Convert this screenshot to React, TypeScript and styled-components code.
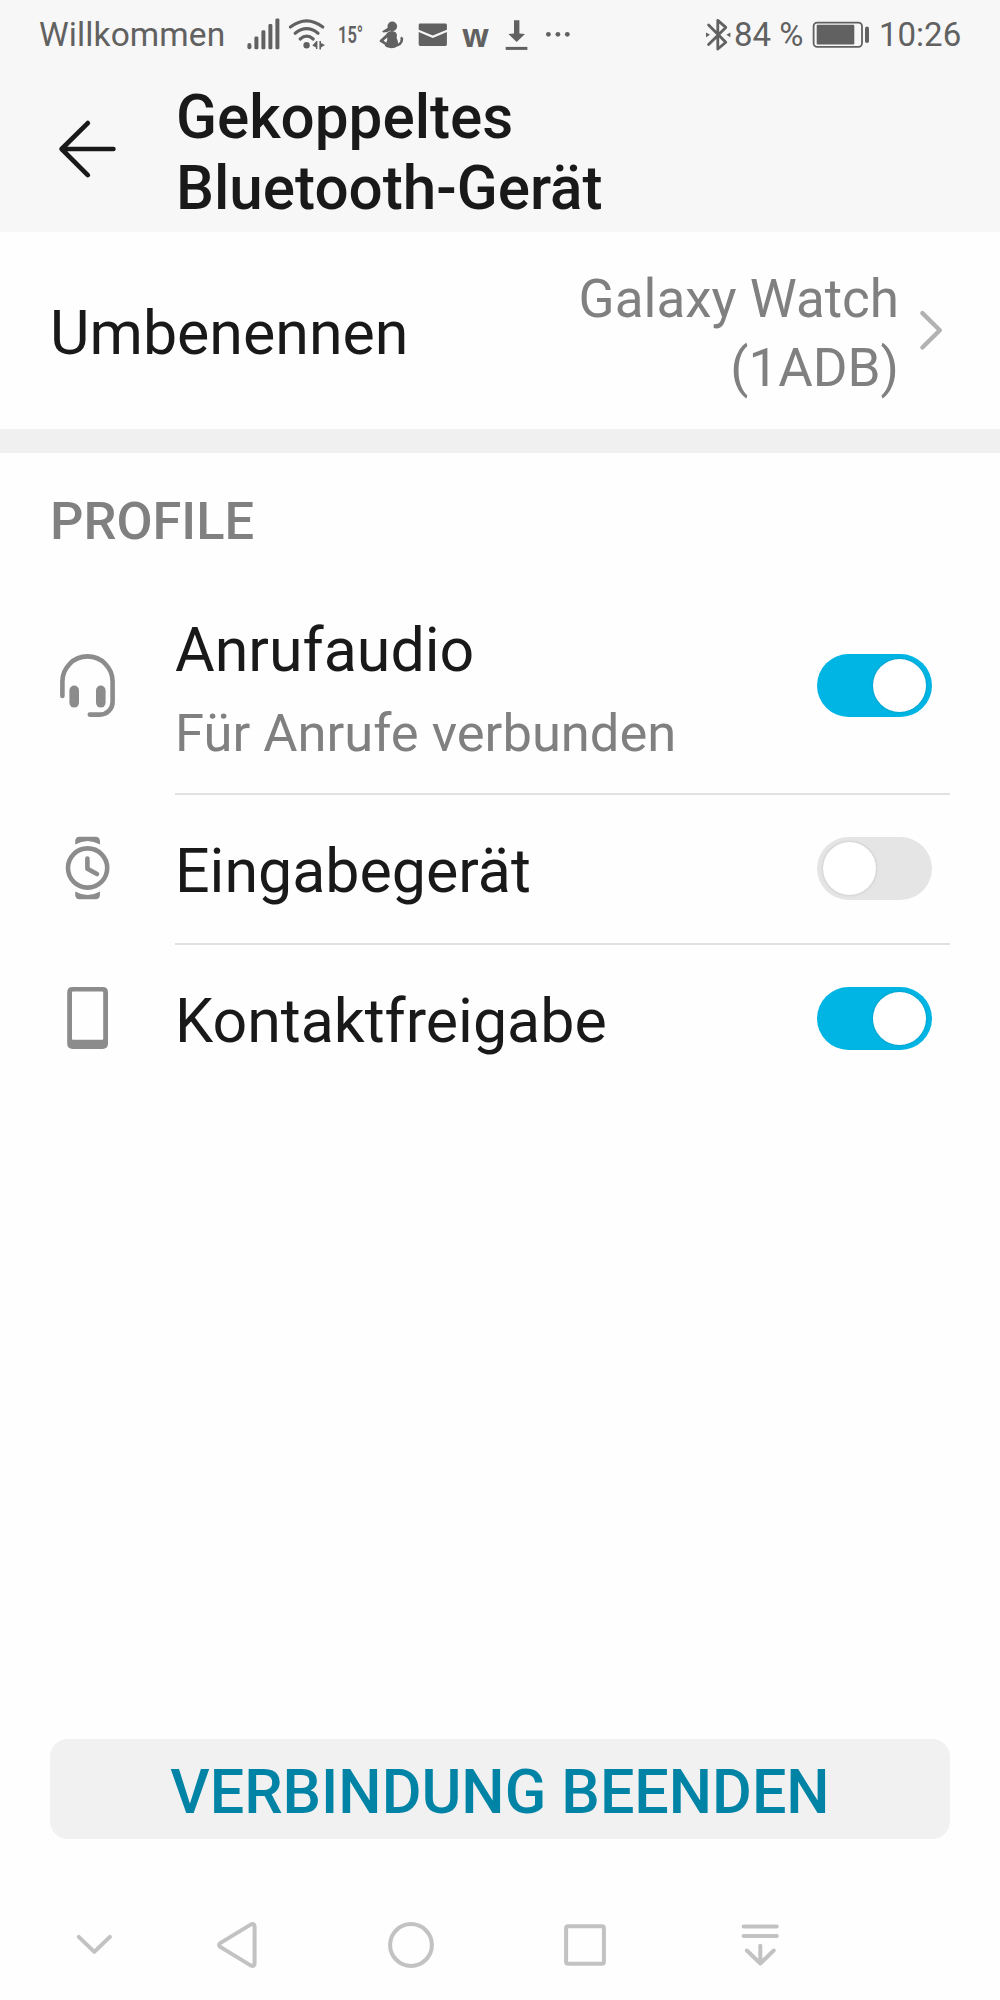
import React, { useState } from "react";
import styled, { createGlobalStyle } from "styled-components";

const GlobalStyle = createGlobalStyle`
  body { margin: 0; background: #fefefe; }
  * { box-sizing: border-box; }
  button { font: inherit; border: 0; padding: 0; background: none; }
  svg { display: block; flex: none; }
`;

const ink = "#191919";
const muted = "#808080";
const statusInk = "#616161";
const navInk = "#c2c2c2";

const Screen = styled.div`
  width: 1000px;
  height: 2000px;
  display: flex;
  flex-direction: column;
  background: #fefefe;
  color: ${ink};
  font-family: Roboto, "Liberation Sans", sans-serif;
  overflow: hidden;
`;

const StatusBar = styled.div`
  height: 69px;
  flex: none;
  padding: 0 39px;
  display: flex;
  justify-content: space-between;
  align-items: center;
  background: #f7f7f7;
  color: ${statusInk};
  font-size: 33px;
  line-height: 69px;
  white-space: nowrap;
`;

const StatusGroup = styled.div`
  display: flex;
  align-items: center;
`;

const Carrier = styled.span`
  width: 207px;
  font-size: 33.5px;
  letter-spacing: 0.1px;
`;

const Temperature = styled.span`
  width: 40px;
  font-size: 24.5px;
  font-weight: 600;
  transform: scaleX(0.67);
  transform-origin: 0 50%;
`;

const Word = styled.span`
  width: 42px;
  font-family: "Open Sans", sans-serif;
  font-size: 31.5px;
  font-weight: 700;
  line-height: 62px;
`;

const Percent = styled.span`
  width: 77px;
  margin-left: -1px;
`;

const Clock = styled.span`
  width: 82px;
`;

const Header = styled.header`
  height: 163px;
  flex: none;
  display: flex;
  padding: 13px 0 0 54px;
  background: #f7f7f7;
`;

const BackButton = styled.button`
  width: 122px;
  height: 134px;
  display: flex;
  align-items: center;
`;

const Title = styled.h1`
  margin: 0;
  width: 520px;
  font-size: 60.2px;
  font-weight: 500;
  line-height: 71px;
`;

const RenameRow = styled.div`
  height: 197px;
  flex: none;
  display: flex;
  align-items: center;
  justify-content: space-between;
  padding: 0 50px;
`;

const RenameLabel = styled.div`
  padding-top: 6px;
  font-size: 60.9px;
  line-height: 70px;
`;

const RenameValue = styled.div`
  display: flex;
  align-items: center;
`;

const DeviceName = styled.div`
  width: 340px;
  padding-top: 6px;
  text-align: right;
  color: ${muted};
  font-size: 53px;
  line-height: 69px;
`;

const SectionGap = styled.div`
  height: 24px;
  flex: none;
  background: #f0f0f0;
`;

const SectionTitle = styled.h2`
  height: 126px;
  flex: none;
  margin: 0;
  padding: 8px 50px 0;
  color: ${muted};
  font-size: 52.4px;
  font-weight: 500;
  line-height: 120px;
`;

const Row = styled.div<{ $height: number }>`
  height: ${(p) => p.$height}px;
  flex: none;
  display: flex;
  padding-left: 50px;
`;

const RowIcon = styled.div`
  width: 125px;
  padding-bottom: 2px;
  display: flex;
  align-items: center;
`;

const RowBody = styled.div<{ $divided: boolean }>`
  width: 775px;
  display: flex;
  align-items: center;
  justify-content: space-between;
  padding: ${(p) => (p.$divided ? "0 18px 0 0" : "0 18px 2px 0")};
  border-bottom: ${(p) => (p.$divided ? "2px solid #e1e1e1" : "0")};
`;

const RowText = styled.div<{ $offset: number }>`
  padding-top: ${(p) => p.$offset}px;
`;

const RowLabel = styled.div`
  font-size: 60.9px;
  line-height: 82px;
`;

const RowHint = styled.div`
  color: ${muted};
  font-size: 52.5px;
  line-height: 82px;
`;

const Track = styled.button<{ $on: boolean }>`
  width: 115px;
  height: 63px;
  margin-bottom: 1px;
  border-radius: 32px;
  display: flex;
  align-items: center;
  justify-content: ${(p) => (p.$on ? "flex-end" : "flex-start")};
  padding: 0 6px;
  background: ${(p) => (p.$on ? "#00b5e4" : "#e5e5e5")};
`;

const Knob = styled.span`
  width: 53px;
  height: 53px;
  border-radius: 50%;
  background: #ffffff;
  box-shadow: 0 0 3px rgba(0, 0, 0, 0.18);
`;

const Footer = styled.div`
  margin-top: auto;
  flex: none;
  padding: 0 50px;
`;

const DisconnectButton = styled.button`
  width: 900px;
  height: 100px;
  border-radius: 18px;
  background: #f1f1f1;
  color: #0083a5;
  padding-top: 6px;
  font-size: 61px;
  font-weight: 500;
  line-height: 94px;
  white-space: nowrap;
`;

const NavBar = styled.nav`
  height: 161px;
  flex: none;
  display: flex;
  align-items: center;
  padding: 50px 0 0 64px;
`;

const NavButton = styled.button<{ $width: number }>`
  width: ${(p) => p.$width}px;
  display: flex;
  justify-content: flex-start;
`;

const SignalIcon = () => (
  <svg width="40" height="68" viewBox="246 0 40 68" fill={statusInk}>
    <rect x="247.4" y="42" width="4" height="6.3" rx="2" />
    <rect x="254.4" y="35.6" width="4" height="12.7" rx="1.4" />
    <rect x="261.4" y="29.3" width="4" height="19" rx="1.4" />
    <rect x="268.4" y="23" width="4" height="25.3" rx="1.4" />
    <rect x="275.4" y="17.4" width="4" height="30.9" rx="1.4" />
  </svg>
);

const WifiIcon = () => (
  <svg width="52" height="68" viewBox="286 0 52 68" fill="none" stroke={statusInk} strokeWidth="3.2" strokeLinecap="round">
    <path d="M290.4 26 Q306.7 13.6 322.8 26" />
    <path d="M295.2 32.2 Q306.7 23.2 318 32.2" />
    <path d="M300.2 38 Q306.7 32.2 313.2 38" />
    <g fill={statusInk} stroke="none">
      <circle cx="306.6" cy="44.2" r="3.2" />
      <path d="M312.3 44.4 L316 40.6 V40 H317.4 V48 H316 V46.4Z M319.4 40 H321 V42 L325 44 L321 46.6 V48.4 H319.4Z" />
    </g>
  </svg>
);

const PregnancyIcon = () => (
  <svg width="38" height="68" viewBox="378 0 38 68" fill={statusInk}>
    <circle cx="392.3" cy="25.4" r="4.8" />
    <path d="M388.6 26.2 L382.2 30.2 L383.2 31.6 L387.4 31 Q390.4 30 391 28Z" />
    <path
      fillRule="evenodd"
      d="M389.2 30.6 Q393 29.2 396 31.6 Q397.6 33.6 396.6 37 Q398 39.4 398 42.6 Q400.6 41.4 400.6 38.4 L400.2 37 L401.8 35.6 L403.2 37.4 Q403.4 43.4 397.8 45.2 Q392.4 48.6 386.2 46 Q384.2 44.4 384.8 43.8 L379.6 40.6 Q379.4 39.4 380.6 38.6 L386 33.6 Q387 31.4 389.2 30.6Z M387.2 36.4 L383.6 39.6 L386.2 41.8 Q387.8 39.4 387.2 36.4Z"
    />
  </svg>
);

const MailIcon = () => (
  <svg width="46" height="68" viewBox="416 0 46 68" fill={statusInk}>
    <path d="M420.2 22.6 H445.4 Q446.9 22.6 446.9 24 V28.8 L432.8 34.6 L418.7 28.8 V24 Q418.7 22.6 420.2 22.6Z" />
    <path d="M418.7 31 L432.8 36.9 L446.9 31 V43.6 Q446.9 45 445.4 45 H420.2 Q418.7 45 418.7 43.6Z" />
  </svg>
);

const DownloadIcon = () => (
  <svg width="40" height="68" viewBox="504 0 40 68" fill={statusInk}>
    <path d="M514 19.3 H519.4 V32.4 L525 33 L516.7 41 L508.4 33 L514 32.4Z" />
    <rect x="505.7" y="45.9" width="21.7" height="3" />
  </svg>
);

const MoreIcon = () => (
  <svg width="30" height="68" viewBox="544 0 30 68" fill={statusInk}>
    <circle cx="548.4" cy="33.3" r="2.4" />
    <circle cx="557.9" cy="33.3" r="2.4" />
    <circle cx="567.3" cy="33.3" r="2.4" />
  </svg>
);

const BluetoothIcon = () => (
  <svg width="30" height="68" viewBox="705 0 30 68" fill="none" stroke={statusInk} strokeWidth="2.8" strokeLinejoin="round" strokeLinecap="round">
    <path d="M708.6 24 L725.8 41.2 L717.8 48 V19.4 L725.8 26.4 L708.6 43.4" />
    <path d="M706 31.4 V36.2 L710 33.8Z M730.4 31.4 V36.2 L726.4 33.8Z" fill={statusInk} stroke="none" />
  </svg>
);

const BatteryIcon = () => (
  <svg width="68" height="68" viewBox="811 0 68 68" fill={statusInk}>
    <rect x="813.6" y="21.6" width="48.4" height="24.2" rx="3.6" fill="none" stroke={statusInk} strokeWidth="1.8" />
    <rect x="816.7" y="23.8" width="37.6" height="19.6" rx="1" />
    <rect x="865" y="25.4" width="4" height="16.6" rx="2" />
  </svg>
);

const BackIcon = () => (
  <svg width="66" height="66" viewBox="54 116.3 66 66" fill="none" stroke={ink} strokeWidth="4.7" strokeLinecap="round" strokeLinejoin="round">
    <path d="M61.6 149.3 H113.4 M87.8 123.4 L61.6 149.3 L87.8 175.4" />
  </svg>
);

const ChevronIcon = () => (
  <svg width="51" height="50" viewBox="899 305.5 51 50" fill="none" stroke="#b2b2b2" strokeWidth="4.4" strokeLinecap="round" strokeLinejoin="round">
    <path d="M922.4 312.6 L939.8 329.8 L922.4 347" />
  </svg>
);

const HeadsetIcon = () => (
  <svg width="76" height="70" viewBox="50 651 76 70" fill="none" stroke="#8c8c8c" strokeWidth="4.6" strokeLinecap="round">
    <path d="M62.4 696 V681.5 A25.1 25.1 0 0 1 112.6 681.5 V702 A12.6 12.6 0 0 1 100 714.6 H89.8" />
    <g fill="#8c8c8c" stroke="none">
      <rect x="69.4" y="685.6" width="9.6" height="22" rx="4.8" />
      <rect x="96" y="685.6" width="9.6" height="22" rx="4.8" />
    </g>
  </svg>
);

const WatchIcon = () => (
  <svg width="76" height="70" viewBox="50 834 76 70" fill="none" stroke="#8c8c8c" strokeWidth="4.6" strokeLinecap="round" strokeLinejoin="round">
    <circle cx="87.6" cy="868" r="19.6" />
    <path d="M87.4 858.6 V868.8 L97 874" />
    <g fill="#8c8c8c" stroke="none">
      <path d="M75.2 844.6 V841 Q75.6 836.8 79.6 836.7 H95.6 Q99.6 836.8 100 841 V844.6 Q87.6 837.6 75.2 844.6Z" />
      <path d="M75.2 891.4 V895 Q75.6 899.2 79.6 899.3 H95.6 Q99.6 899.2 100 895 V891.4 Q87.6 898.4 75.2 891.4Z" />
    </g>
  </svg>
);

const PhoneIcon = () => (
  <svg width="76" height="70" viewBox="50 984 76 70" fill="#8c8c8c">
    <path
      fillRule="evenodd"
      d="M72.6 987 H102.6 Q108 987 108 992.4 V1043.6 Q108 1049 102.6 1049 H72.6 Q67.2 1049 67.2 1043.6 V992.4 Q67.2 987 72.6 987Z M72.8 991.6 Q72 991.6 72 992.4 V1039 Q72 1039.8 72.8 1039.8 H102.4 Q103.2 1039.8 103.2 1039 V992.4 Q103.2 991.6 102.4 991.6Z"
    />
  </svg>
);

const navStroke = { fill: "none", stroke: navInk, strokeWidth: 4, strokeLinecap: "round" as const, strokeLinejoin: "round" as const };

const NavHideIcon = () => (
  <svg width="60" height="60" viewBox="64 1914.3 60 60" {...navStroke}>
    <path d="M78.8 1936.2 L94.3 1951.2 L109.9 1936.2" />
  </svg>
);

const NavBackIcon = () => (
  <svg width="60" height="60" viewBox="207 1914.3 60 60" {...navStroke}>
    <path d="M220.2 1942.4 L250.6 1923.9 Q254.6 1922 254.6 1926 V1962.6 Q254.6 1966.6 250.6 1964.7 L220.2 1946.2 Q218 1944.3 220.2 1942.4Z" />
  </svg>
);

const NavHomeIcon = () => (
  <svg width="60" height="60" viewBox="381 1914.3 60 60" {...navStroke}>
    <circle cx="411" cy="1944.3" r="20.9" />
  </svg>
);

const NavRecentIcon = () => (
  <svg width="60" height="60" viewBox="555 1914.3 60 60" {...navStroke}>
    <rect x="566.1" y="1925.5" width="37.8" height="37.6" rx="2" />
  </svg>
);

const NavPanelIcon = () => (
  <svg width="60" height="60" viewBox="730 1914.3 60 60" {...navStroke}>
    <path d="M743.6 1925.7 H776.8 M743.6 1935.4 H776.8 M760.3 1945 V1962.6 M746.9 1949.8 L760.3 1962.8 L773.7 1949.8" />
  </svg>
);

const Toggle = ({ initial, label }: { initial: boolean; label: string }) => {
  const [on, setOn] = useState(initial);
  return (
    <Track $on={on} role="switch" aria-checked={on} aria-label={label} onClick={() => setOn(!on)}>
      <Knob />
    </Track>
  );
};

const profiles = [
  { label: "Anrufaudio", hint: "Für Anrufe verbunden", on: true, height: 216, offset: 11, Icon: HeadsetIcon },
  { label: "Eingabegerät", on: false, height: 150, offset: 6, Icon: WatchIcon },
  { label: "Kontaktfreigabe", on: true, height: 150, offset: 6, Icon: PhoneIcon },
];

export default function App() {
  return (
    <Screen>
      <GlobalStyle />
      <StatusBar>
        <StatusGroup>
          <Carrier>Willkommen</Carrier>
          <SignalIcon />
          <WifiIcon />
          <Temperature>15°</Temperature>
          <PregnancyIcon />
          <MailIcon />
          <Word>w</Word>
          <DownloadIcon />
          <MoreIcon />
        </StatusGroup>
        <StatusGroup>
          <BluetoothIcon />
          <Percent>84 %</Percent>
          <BatteryIcon />
          <Clock>10:26</Clock>
        </StatusGroup>
      </StatusBar>
      <Header>
        <BackButton>
          <BackIcon />
        </BackButton>
        <Title>
          Gekoppeltes
          <br />
          Bluetooth-Gerät
        </Title>
      </Header>
      <RenameRow>
        <RenameLabel>Umbenennen</RenameLabel>
        <RenameValue>
          <DeviceName>
            Galaxy Watch
            <br />
            (1ADB)
          </DeviceName>
          <ChevronIcon />
        </RenameValue>
      </RenameRow>
      <SectionGap />
      <SectionTitle>PROFILE</SectionTitle>
      {profiles.map(({ label, hint, on, height, offset, Icon }, i) => (
        <Row key={label} $height={height}>
          <RowIcon>
            <Icon />
          </RowIcon>
          <RowBody $divided={i < profiles.length - 1}>
            <RowText $offset={offset}>
              <RowLabel>{label}</RowLabel>
              {hint && <RowHint>{hint}</RowHint>}
            </RowText>
            <Toggle initial={on} label={label} />
          </RowBody>
        </Row>
      ))}
      <Footer>
        <DisconnectButton>VERBINDUNG BEENDEN</DisconnectButton>
      </Footer>
      <NavBar>
        <NavButton $width={143}><NavHideIcon /></NavButton>
        <NavButton $width={174}><NavBackIcon /></NavButton>
        <NavButton $width={174}><NavHomeIcon /></NavButton>
        <NavButton $width={175}><NavRecentIcon /></NavButton>
        <NavButton $width={60}><NavPanelIcon /></NavButton>
      </NavBar>
    </Screen>
  );
}
